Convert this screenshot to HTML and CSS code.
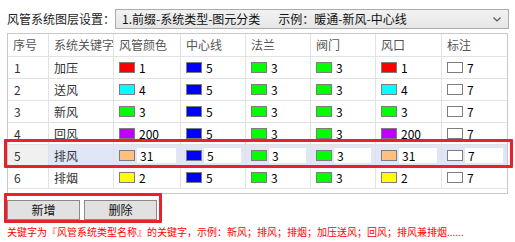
FILE: index.html
```html
<!DOCTYPE html>
<html lang="zh">
<head>
<meta charset="utf-8">
<link rel="stylesheet" href="styles.css">
</head>
<body>
<div class="page">
  <div class="top">
    <span class="label">风管系统图层设置：</span>
    <div class="combo">
      <span class="combo-text">1.前缀-系统类型-图元分类</span>
      <span class="combo-ex">示例：暖通-新风-中心线</span>
      <svg class="chev" width="8" height="5" viewBox="0 0 8 5"><path d="M0.5 0.5 L4 4 L7.5 0.5" fill="none" stroke="#555" stroke-width="1.2"/></svg>
    </div>
  </div>

  <div class="grid">
    <div class="row head">
      <div class="cell">序号</div><div class="cell">系统关键字</div><div class="cell">风管颜色</div><div class="cell">中心线</div><div class="cell">法兰</div><div class="cell">阀门</div><div class="cell">风口</div><div class="cell last">标注</div>
    </div>
    <div class="row">
      <div class="cell txt">1</div><div class="cell txt">加压</div>
      <div class="cell"><span class="sw red"></span><span class="num">1</span></div>
      <div class="cell"><span class="sw blue"></span><span class="num">5</span></div>
      <div class="cell"><span class="sw green"></span><span class="num">3</span></div>
      <div class="cell"><span class="sw green"></span><span class="num">3</span></div>
      <div class="cell"><span class="sw red"></span><span class="num">1</span></div>
      <div class="cell last"><span class="sw white"></span><span class="num">7</span></div>
    </div>
    <div class="row">
      <div class="cell txt">2</div><div class="cell txt">送风</div>
      <div class="cell"><span class="sw cyan"></span><span class="num">4</span></div>
      <div class="cell"><span class="sw blue"></span><span class="num">5</span></div>
      <div class="cell"><span class="sw green"></span><span class="num">3</span></div>
      <div class="cell"><span class="sw green"></span><span class="num">3</span></div>
      <div class="cell"><span class="sw cyan"></span><span class="num">4</span></div>
      <div class="cell last"><span class="sw white"></span><span class="num">7</span></div>
    </div>
    <div class="row">
      <div class="cell txt">3</div><div class="cell txt">新风</div>
      <div class="cell"><span class="sw green"></span><span class="num">3</span></div>
      <div class="cell"><span class="sw blue"></span><span class="num">5</span></div>
      <div class="cell"><span class="sw green"></span><span class="num">3</span></div>
      <div class="cell"><span class="sw green"></span><span class="num">3</span></div>
      <div class="cell"><span class="sw green"></span><span class="num">3</span></div>
      <div class="cell last"><span class="sw white"></span><span class="num">7</span></div>
    </div>
    <div class="row">
      <div class="cell txt">4</div><div class="cell txt">回风</div>
      <div class="cell"><span class="sw purple"></span><span class="num">200</span></div>
      <div class="cell"><span class="sw blue"></span><span class="num">5</span></div>
      <div class="cell"><span class="sw green"></span><span class="num">3</span></div>
      <div class="cell"><span class="sw green"></span><span class="num">3</span></div>
      <div class="cell"><span class="sw purple"></span><span class="num">200</span></div>
      <div class="cell last"><span class="sw white"></span><span class="num">7</span></div>
    </div>
    <div class="row sel">
      <div class="cell txt idx">5</div><div class="cell txt">排风</div>
      <div class="cell"><span class="sw orange"></span><span class="inp">31</span></div>
      <div class="cell"><span class="sw blue"></span><span class="inp">5</span></div>
      <div class="cell"><span class="sw green"></span><span class="inp">3</span></div>
      <div class="cell"><span class="sw green"></span><span class="inp">3</span></div>
      <div class="cell"><span class="sw orange"></span><span class="inp">31</span></div>
      <div class="cell last"><span class="sw white"></span><span class="inp">7</span></div>
    </div>
    <div class="row">
      <div class="cell txt">6</div><div class="cell txt">排烟</div>
      <div class="cell"><span class="sw yellow"></span><span class="num">2</span></div>
      <div class="cell"><span class="sw blue"></span><span class="num">5</span></div>
      <div class="cell"><span class="sw green"></span><span class="num">3</span></div>
      <div class="cell"><span class="sw green"></span><span class="num">3</span></div>
      <div class="cell"><span class="sw yellow"></span><span class="num">2</span></div>
      <div class="cell last"><span class="sw white"></span><span class="num">7</span></div>
    </div>
  </div>

  <div class="actions">
    <button class="btn">新增</button>
    <button class="btn">删除</button>
  </div>
  <p class="note">关键字为『风管系统类型名称』的关键字，示例：新风；排风；排烟；加压送风；回风；排风兼排烟......</p>

  <div class="mark mark-row"></div>
  <div class="mark mark-btns"></div>
</div>
</body>
</html>
```
FILE: styles.css
```css
* { box-sizing: border-box; }
html, body { margin: 0; padding: 0; background: #fff; }
body {
  font-family: "Noto Sans CJK SC", "Noto Sans", sans-serif;
  font-size: 12px;
  color: #333;
}
.page {
  position: relative;
  width: 515px;
  height: 242px;
  padding: 9px 0 0 7px;
}
.top {
  display: flex;
  align-items: center;
  height: 20px;
}
.label {
  width: 108px;
  line-height: 20px;
  white-space: nowrap;
  color: #222;
}
.combo {
  position: relative;
  display: flex;
  align-items: center;
  width: 394px;
  height: 20px;
  border: 1px solid #acacac;
  background: linear-gradient(#f2f2f2, #e6e6e6);
  padding-left: 6px;
  line-height: 18px;
  color: #111;
  white-space: nowrap;
}
.combo-ex { margin-left: 18px; }
.chev { position: absolute; right: 7px; top: 7px; }

.grid {
  margin-top: 4px;
  width: 501px;
  border: 1px solid #c9c9c9;
  padding-bottom: 4px;
}
.row {
  display: grid;
  grid-template-columns: 41px 65px 67px 65px 65px 65px 66px 65px;
  height: 22px;
  border-bottom: 1px solid #e2e2e2;
}
.row.head { height: 23px; color: #555; }
.cell {
  display: flex;
  align-items: center;
  padding-left: 5px;
  border-right: 1px solid #e2e2e2;
  overflow: hidden;
  white-space: nowrap;
  line-height: 16px;
}
.cell.last { border-right: none; }
.row.head .cell { padding-left: 5px; }
.txt { color: #333; }
.cell.txt:first-child { padding-left: 6px; }
.sw {
  flex: none;
  width: 16px;
  height: 11px;
  border: 1px solid #7d7d7d;
  margin-right: 4px;
}
.num { color: #000; }
.red { background: #ff0000; }
.blue { background: #0000ff; }
.green { background: #00ff00; }
.cyan { background: #00ffff; }
.purple { background: #bf00ff; }
.orange { background: #ffbf7f; }
.yellow { background: #ffff00; }
.white { background: #ffffff; }

.row.sel .cell { background: #e1e6f7; }
.row.sel .cell.idx { background: #f0f0f0; }
.row.sel .sw { margin-right: 2px; }
.inp {
  flex: 1;
  height: 15px;
  margin-right: 4px;
  background: #fff;
  padding-left: 3px;
  line-height: 15px;
  color: #000;
}

.actions {
  display: flex;
  gap: 4px;
  margin-top: 6px;
}
.btn {
  width: 73px;
  height: 20px;
  padding: 0;
  border: 1px solid #8a8a8a;
  background: #e1e1e1;
  font-family: "Noto Sans CJK SC", "Noto Sans", sans-serif;
  font-size: 12px;
  line-height: 18px;
  color: #111;
}
.note {
  margin: 6px 0 0 0;
  font-size: 10px;
  line-height: 12px;
  color: #ff0000;
  white-space: nowrap;
}
.mark {
  position: absolute;
  border: 3px solid #e8222b;
  border-radius: 1px;
}
.mark-row { left: 4px; top: 139px; width: 509px; height: 29px; }
.mark-btns { left: 4px; top: 193px; width: 158px; height: 30px; }
```
